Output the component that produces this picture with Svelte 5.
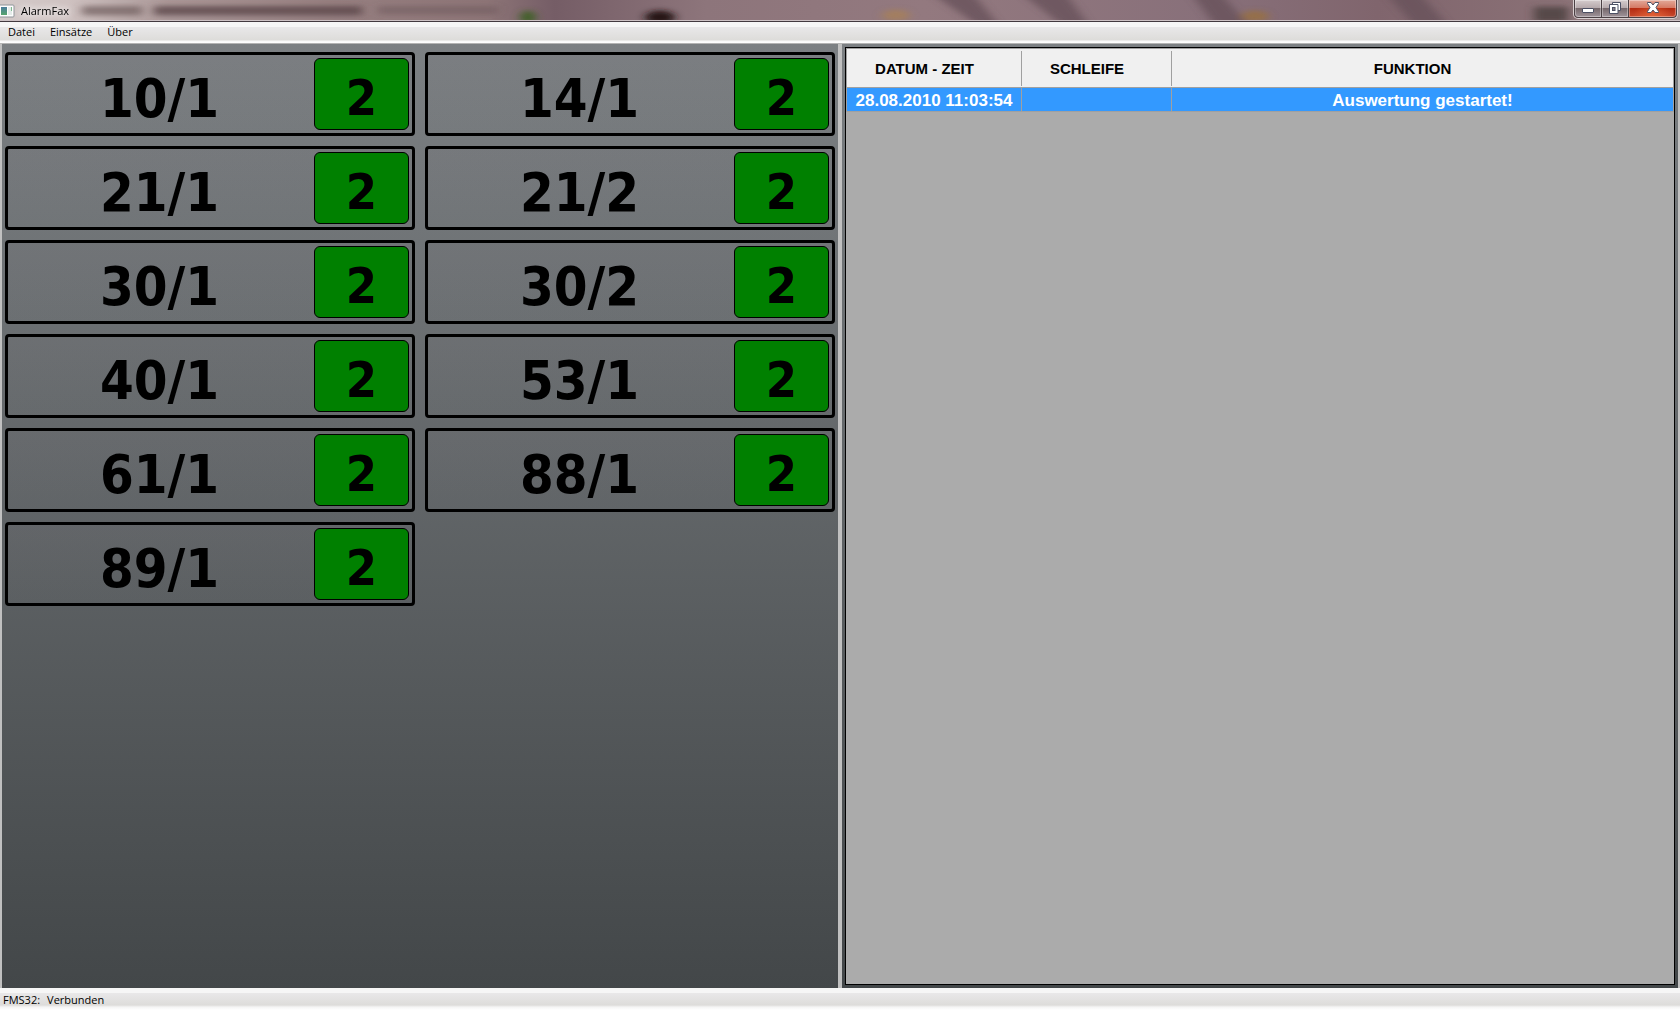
<script>
  let vehicles = [
    { name: "10/1", status: 2 },
    { name: "14/1", status: 2 },
    { name: "21/1", status: 2 },
    { name: "21/2", status: 2 },
    { name: "30/1", status: 2 },
    { name: "30/2", status: 2 },
    { name: "40/1", status: 2 },
    { name: "53/1", status: 2 },
    { name: "61/1", status: 2 },
    { name: "88/1", status: 2 },
    { name: "89/1", status: 2 },
  ];

  let events = [
    { time: "28.08.2010 11:03:54", loop: "", text: "Auswertung gestartet!" },
  ];

  let menu = ["Datei", "Einsätze", "Über"];
  let selected = 0;
</script>

<div class="window">
  <header class="titlebar">
    <svg class="glass" viewBox="0 0 1680 22" preserveAspectRatio="none" aria-hidden="true">
      <defs>
        <linearGradient id="tint">
          <stop offset="0" stop-color="#d3cac9" />
          <stop offset="0.04" stop-color="#cfc2c1" />
          <stop offset="0.1" stop-color="#ab9898" />
          <stop offset="0.2" stop-color="#967f80" />
          <stop offset="0.29" stop-color="#8d7577" />
          <stop offset="0.33" stop-color="#755d66" />
          <stop offset="0.42" stop-color="#8d757b" />
          <stop offset="0.55" stop-color="#93797f" />
          <stop offset="0.72" stop-color="#88707a" />
          <stop offset="0.82" stop-color="#80656d" />
          <stop offset="0.93" stop-color="#8a7176" />
          <stop offset="1" stop-color="#a89a9a" />
        </linearGradient>
        <filter id="soft" x="-10%" y="-100%" width="120%" height="300%">
          <feGaussianBlur stdDeviation="5 3" />
        </filter>
      </defs>
      <rect width="1680" height="22" fill="url(#tint)" />
      <g filter="url(#soft)">
        <path
          d="M930-8h42l28 36h-20zM1020-8h45l25 36h-26zM1190-8h30l30 36h-34zM1385-8h34l30 36h-34z"
          fill="#68525a"
          opacity="0.8"
        />
        <ellipse cx="528" cy="18" rx="8" ry="7" fill="#43602b" />
        <ellipse cx="660" cy="18" rx="15" ry="7" fill="#251718" />
        <ellipse cx="896" cy="16" rx="14" ry="6" fill="#a88058" opacity="0.8" />
        <ellipse cx="1255" cy="17" rx="14" ry="6" fill="#98703f" opacity="0.8" />
        <rect x="1534" y="7" width="34" height="16" fill="#574849" />
        <rect x="82" y="6" width="60" height="10" fill="#6d5c5c" opacity="0.7" />
        <rect x="154" y="6" width="208" height="10" fill="#5c484b" opacity="0.8" />
        <rect x="378" y="6" width="120" height="9" fill="#6b5559" opacity="0.5" />
      </g>
    </svg>
    <svg class="app-icon" viewBox="0 0 15 14" width="15" height="14" aria-hidden="true">
      <defs>
        <linearGradient id="pane" x2="0" y2="1">
          <stop offset="0" stop-color="#4a7d9c" />
          <stop offset="1" stop-color="#56a56c" />
        </linearGradient>
      </defs>
      <rect x="-2" y="1" width="16" height="12" rx="1" fill="#fdfdfd" stroke="#8f9499" />
      <rect x="1" y="3" width="6" height="8" fill="url(#pane)" />
      <rect x="8" y="3" width="4" height="8" fill="#e4ecea" />
      <rect x="11" y="3" width="1" height="4" fill="#7fb98f" />
    </svg>
    <span class="title">AlarmFax</span>
    <div class="caption">
      <button class="min" aria-label="Minimieren">
        <svg viewBox="0 0 14 14" width="14" height="14">
          <rect x="1.5" y="7.5" width="11" height="4" rx="0.5" fill="#fff" stroke="#4c5064" />
        </svg>
      </button>
      <button class="max" aria-label="Wiederherstellen">
        <svg viewBox="0 0 14 14" width="14" height="14">
          <path d="M4.500 1.500h8v8h-8z" fill="#fff" stroke="#4c5064" />
          <path d="M1.500 3.500h8.500v9h-8.500z" fill="#fff" stroke="#4c5064" />
          <rect x="4.500" y="6.500" width="2.500" height="3" fill="#8b8288" stroke="#4c5064" />
        </svg>
      </button>
      <button class="close" aria-label="Schließen">
        <svg viewBox="0 0 14 14" width="14" height="14">
          <path
            d="M1.500 1.500h3.500l2 2.500 2-2.500h3.500v1l-2.500 4 2.500 4v1H9L7 9l-2 2.500H1.500v-1l2.500-4-2.500-4z"
            fill="#fff"
            stroke="#4c5064"
          />
        </svg>
      </button>
    </div>
  </header>

  <nav class="menubar">
    {#each menu as item}
      <button>{item}</button>
    {/each}
  </nav>

  <main>
    <section class="vehicles">
      {#each vehicles as vehicle}
        <div class="vehicle">
          <span class="name">{vehicle.name}</span>
          <span class="status">{vehicle.status}</span>
        </div>
      {/each}
    </section>

    <section class="log">
      <div class="grid">
        <table>
          <colgroup>
            <col class="col-time" />
            <col class="col-loop" />
            <col />
          </colgroup>
          <thead>
            <tr>
              <th>DATUM - ZEIT</th>
              <th>SCHLEIFE</th>
              <th>FUNKTION</th>
            </tr>
          </thead>
          <tbody>
            {#each events as event, index}
              <tr class:selected={index === selected}>
                <td>{event.time}</td>
                <td>{event.loop}</td>
                <td>{event.text}</td>
              </tr>
            {/each}
          </tbody>
        </table>
      </div>
    </section>
  </main>

  <footer class="statusbar">
    <span>FMS32:</span>
    <span>Verbunden</span>
  </footer>
</div>

<style>
  :global(body) {
    margin: 0;
  }

  .window {
    display: flex;
    flex-direction: column;
    height: 100vh;
    isolation: isolate;
    font-family: "Open Sans", "Noto Sans", sans-serif;
    font-size: 11px;
    color: #000;
    background: #c0c0c0;
  }

  .titlebar {
    position: relative;
    display: flex;
    align-items: center;
    box-sizing: border-box;
    height: 22px;
    border-bottom: 1px solid #433a40;
    box-shadow: inset 0 -1px #cdc2c5;
    overflow: hidden;
  }

  .glass {
    position: absolute;
    inset: 0;
    z-index: -1;
    width: 100%;
    height: 100%;
  }

  .title {
    margin-left: 6px;
    text-shadow: 0 0 6px #fff, 0 0 8px #fff;
  }

  .caption {
    display: flex;
    align-self: flex-start;
    box-sizing: border-box;
    height: 19px;
    margin-left: auto;
    margin-right: 2px;
    border: 1px solid #d8cfd0;
    border-top: none;
    border-radius: 0 0 5px 5px;
    overflow: hidden;
  }

  .caption button {
    display: flex;
    align-items: center;
    justify-content: center;
    box-sizing: border-box;
    width: 28px;
    height: 18px;
    padding: 0 0 2px;
    border: 1px solid #4b4044;
    border-top: none;
    background: linear-gradient(#d5cccd, #b3a6a9 50%, #76686c 50%, #a0949a);
    box-shadow: inset 0 0 0 1px rgba(255, 255, 255, 0.35);
  }

  .caption .min {
    border-radius: 0 0 0 4px;
  }

  .caption .max {
    width: 27px;
    border-left: none;
  }

  .caption .close {
    width: 48px;
    border-left: none;
    border-radius: 0 0 4px 0;
    background: radial-gradient(ellipse at 50% 100%, rgba(240, 110, 60, 0.7), transparent 60%),
      linear-gradient(#e3a898, #d37661 50%, #b52c12 50%, #c8492c);
  }

  .menubar {
    display: flex;
    box-sizing: border-box;
    height: 22px;
    padding-left: 1px;
    border-bottom: 1px solid #b4b4b4;
    background: linear-gradient(#f6f6f6 5px, #e9e8e9 5px, #dddcda 18px, #f8f8f8 19px, #fff);
  }

  .menubar button {
    padding: 0 7px 1px;
    border: none;
    background: none;
    font: inherit;
    line-height: 16px;
  }

  .menubar button + button {
    margin-left: 1px;
  }

  main {
    flex: 1;
    display: grid;
    grid-template-columns: 1fr 1fr;
    gap: 4px;
    min-height: 0;
    padding: 0 2px;
  }

  .vehicles,
  .log {
    background: linear-gradient(#7c8083, #434749);
  }

  .vehicles {
    display: grid;
    grid-template-columns: 1fr 1fr;
    grid-auto-rows: 84px;
    gap: 10px;
    padding: 8px 3px;
    font-family: "DejaVu Sans Condensed", "DejaVu Sans", sans-serif;
    font-weight: bold;
  }

  .vehicle {
    display: flex;
    box-sizing: border-box;
    padding: 3px;
    border: 3px solid #000;
    border-radius: 4px;
    background: linear-gradient(rgba(120, 116, 122, 0.15), rgba(112, 116, 120, 0.05));
  }

  .name,
  .status {
    display: flex;
    align-items: center;
    justify-content: center;
    box-sizing: border-box;
    padding-top: 8px;
  }

  .name {
    flex: 1;
    padding-right: 6px;
    font-size: 54px;
  }

  .status {
    width: 95px;
    border: 1px solid #000;
    border-radius: 6px;
    background: #008000;
    font-size: 50px;
  }

  .log {
    display: flex;
    padding: 3px;
  }

  .grid {
    flex: 1;
    border: 1px solid #000;
    background: #ababab;
  }

  table {
    width: 100%;
    border: 1px solid #a0a0a0;
    border-bottom: none;
    border-spacing: 0;
    table-layout: fixed;
    font-family: "Liberation Sans", Arial, sans-serif;
    font-weight: bold;
    text-align: center;
  }

  .col-time {
    width: 175px;
  }

  .col-loop {
    width: 150px;
  }

  th,
  td {
    box-sizing: border-box;
    border-bottom: 1px solid #a0a0a0;
    white-space: nowrap;
  }

  th {
    height: 39px;
    padding: 0 20px 0 0;
    background: linear-gradient(#a0a0a0, #a0a0a0) right 2px / 1px 35px no-repeat #f0f0f0;
    font-size: 15px;
  }

  th:last-child {
    background: #f0f0f0;
  }

  td {
    height: 24px;
    padding: 2px 0 0;
    border-right: 1px solid #a0a0a0;
    font-size: 17px;
    line-height: 21px;
  }

  td:last-child {
    border-right: none;
  }

  .selected td {
    background: #3399ff;
    color: #fff;
  }

  .statusbar {
    display: flex;
    gap: 7px;
    box-sizing: border-box;
    height: 22px;
    padding: 4px 3px 0;
    line-height: 16px;
    background: linear-gradient(#f6f6f6 5px, #e9e8e9 5px, #dddcda 17px, #f4f4f4 19px, #fff);
  }
</style>
